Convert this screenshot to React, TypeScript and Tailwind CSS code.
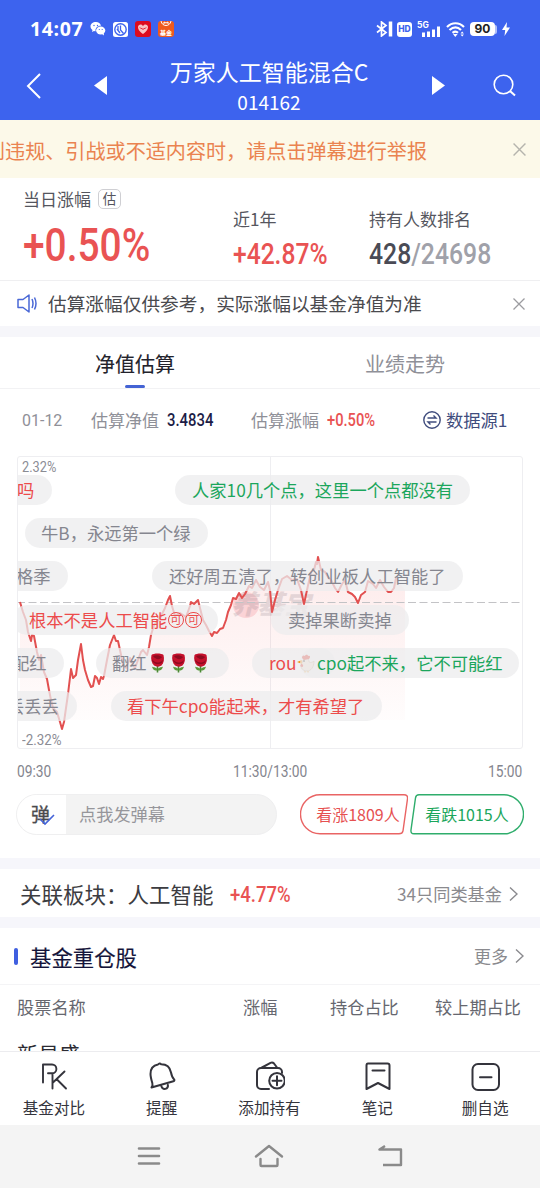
import type { ReactNode } from 'react';
import clsx from 'clsx';

type Tone = 'up' | 'down' | 'flat';

interface Danmu {
  content: ReactNode;
  tone: Tone;
  /** 位置与宽度 */
  box: string;
}

const TONE_CLASS: Record<Tone, string> = {
  up: 'text-[#ec4b4b]',
  down: 'text-[#1ba65c]',
  flat: 'text-[#85868f]',
};

const LINE =
  '20,602 23,612 26,620 28,632 31,641 32,635 34,636 37,652 39,660 41,655 44,672 47,679 49,690 51,700 53,708 57,712 60,722 62,729 64,722 66,708 68,694 71,669 73,678 76,675 78,660 81,644 83,660 85,670 88,680 91,687 93,686 95,676 97,678 99,684 101,677 103,679 104,676 107,660 110,645 114,635 116,641 118,641 120,650 123,664 126,668 130,658 135,668 138,660 141,652 143,650 147,655 149,647 151,635 154,625 160,618 165,608 168,600 170,596 172,606 175,616 180,613 186,617 190,606 191,602 194,604 198,600 200,608 203,620 206,625 209,631 212,636 214,632 217,633 220,629 223,628 226,620 228,612 231,605 233,598 236,599 239,593 242,598 245,594 249,586 252,588 256,580 260,587 264,590 268,582 270,590 272,612 275,600 278,590 282,579 287,576 292,580 297,579 301,590 304,604 307,590 311,572 314,570 316,562 317,564 318,557 321,570 325,572 328,577 331,580 335,588 338,592 342,584 345,580 348,592 352,594 355,597 358,603 361,595 365,592 368,581 373,584 376,588 380,580 384,587 388,592 391,592 394,588 396,578';

/** 窄体数字：外层占位，内层横向压缩 */
function Num({ w, className, children }: { w: string; className: string; children: ReactNode }) {
  return (
    <span className={clsx('block shrink-0', w)}>
      <span className={clsx("block origin-left whitespace-nowrap font-['Roboto',sans-serif]", className)}>
        {children}
      </span>
    </span>
  );
}

function Rose() {
  return (
    <svg className="h-[20px] w-[21.5px] shrink-0" viewBox="0 0 21.5 20">
      <path d="M10.5 11v8.5" stroke="#4b8a35" strokeWidth="1.6" />
      <path d="M10 15.500c-3-2-4-1-5-2 1 4 3 4 5 4zM11 15.500c3-2 4-1 5-2-1 4-3 4-5 4z" fill="#5a9a3c" />
      <path d="M4.500 2c2-2 10-2 12 0 1 4 .5 8-2 10.500-2 1.500-5 1.500-7.500 0C4.500 10 3.500 6 4.500 2z" fill="#c5112c" />
      <path d="M6 3c3-1.500 6-1 9 1-2 3-6 3-9-1zM5 6c2 4 7 5 11 1l-1 2.500c-3 2.500-7 2-9.500-1z" fill="#8e0b20" />
    </svg>
  );
}

function Chicken() {
  return (
    <svg className="mx-[1px] h-[19px] w-[18px] shrink-0" viewBox="0 0 18 19">
      <path d="M7 4c3-1 5 1 5 4 2 1 4 0 5-1 0 6-3 10-7 10-5 0-7-4-5-8z" fill="#efe0d0" stroke="#c9b199" strokeWidth=".9" />
      <path d="M5 4c0-3 2-3 3-2 1-2 3-1 3 0 2-1 3 1 1 3L7 6z" fill="#dd3227" />
      <path d="M5 6 0 8l5 2z" fill="#f0951d" />
      <path d="M4 10c-1 2 0 3 1 3s2-2 0-3z" fill="#dd3227" />
      <circle cx="7" cy="7" r=".9" fill="#333" />
      <path d="M8 17v1.500M11 17v1.500" stroke="#f0951d" />
    </svg>
  );
}

function Ke() {
  return (
    <span className="mx-[.5px] flex size-[16.500px] items-center justify-center rounded-full border border-[#ec4b4b] text-[11.500px] leading-none">
      可
    </span>
  );
}

const DANMU: Danmu[] = [
  { content: '吗', tone: 'up', box: 'left-[-40px] top-[18px] w-[74px] pl-[39px]' },
  { content: '人家10几个点，这里一个点都没有', tone: 'down', box: 'left-[157px] top-[18px] w-[295px] pl-[17px]' },
  { content: '牛B，永远第一个绿', tone: 'flat', box: 'left-[7px] top-[61px] w-[183px] pl-[16px]' },
  { content: '格季', tone: 'flat', box: 'left-[-40px] top-[104px] w-[90px] pl-[38px]' },
  { content: '还好周五清了，转创业板人工智能了', tone: 'flat', box: 'left-[134px] top-[104px] w-[311px] pl-[17px]' },
  { content: <>根本不是人工智能<Ke /><Ke /></>, tone: 'up', box: 'left-[-6px] top-[148px] w-[206px] pl-[17px]' },
  { content: '卖掉果断卖掉', tone: 'flat', box: 'left-[253px] top-[148px] w-[138px] pl-[17px]' },
  { content: '配红', tone: 'flat', box: 'left-[-40px] top-[191px] w-[86px] pl-[34px]' },
  { content: <>翻红<Rose /><Rose /><Rose /></>, tone: 'flat', box: 'left-[78px] top-[191px] w-[133px] pl-[16px]' },
  { content: <>rou<Chicken /></>, tone: 'up', box: 'left-[234px] top-[191px] w-[83px] pl-[17px]' },
  { content: 'cpo起不来，它不可能红', tone: 'down', box: 'left-[282px] top-[191px] w-[219px] pl-[17px]' },
  { content: '丢丢丢', tone: 'flat', box: 'left-[-40px] top-[234px] w-[99px] pl-[29px]' },
  { content: '看下午cpo能起来，才有希望了', tone: 'up', box: 'left-[93px] top-[234px] w-[271px] pl-[16px]' },
];

function StatusBar() {
  return (
    <div className="flex h-[58px] items-center pl-[30px] pr-[30px]">
      <span className="w-[60px] font-['Open_Sans',sans-serif] text-[19.500px] font-bold tracking-[0.6px]">14:07</span>
      <svg className="h-[14px] w-[16px]" viewBox="0 0 16 14" fill="#fff">
        <path d="M6 0C2.700 0 .5 2 .5 4.500c0 1.500.8 2.700 2 3.500L2 10l2-1c.6.1 1.100.2 1.600.2C5 6 7.500 3.600 11 3.700 10.500 1.500 8.500 0 6 0z" />
        <ellipse cx="10.700" cy="8.500" rx="4.600" ry="4" />
        <path d="m12 12 2 1.500-.3-2.500z" />
        <g fill="#3d63ee"><circle cx="4" cy="3.500" r=".7" /><circle cx="7.500" cy="3.500" r=".7" /><circle cx="9.300" cy="7.500" r=".6" /><circle cx="12.200" cy="7.500" r=".6" /></g>
      </svg>
      <svg className="ml-[7px] size-[15px]" viewBox="0 0 15 15" fill="none">
        <rect width="15" height="15" rx="2.500" fill="#fff" />
        <circle cx="7.500" cy="7.500" r="5.700" stroke="#3d63ee" strokeWidth="1.400" />
        <path d="M5 4v5M7.500 3.500V8l3 3.500M4 7l3 4" stroke="#3d63ee" strokeWidth="1.300" />
      </svg>
      <svg className="ml-[7px] size-[16px]" viewBox="0 0 16 16">
        <rect width="16" height="16" rx="3" fill="#dd0b1f" />
        <path d="M8 13C4 10 3 8 3 6c0-3 4-3.500 5-1 1-2.500 5-2 5 1 0 2-1 4-5 7z" fill="#f8c3c3" />
        <path d="M5 6.500c1 2 2 0 3 2 1-2 2 0 3-2" stroke="#dd0b1f" fill="none" />
      </svg>
      <div className="ml-[7px] flex size-[16px] flex-col items-center justify-between overflow-hidden rounded-[3px] bg-[#ef5a1e]">
        <svg className="h-[6px] w-[12px]" viewBox="0 0 12 6" fill="none" stroke="#fff">
          <path d="M1 0c1 6 9 6 10 0M4 3V1l2 1 2-1v2" />
        </svg>
        <span className="text-[6px] font-bold leading-[9px]">基金</span>
      </div>

      <svg className="ml-auto h-[16px] w-[17px]" viewBox="0 0 17 16" fill="none" stroke="#fff" strokeWidth="1.700">
        <path d="m1 4.500 9 7L5.500 15V1L10 4.500l-9 7" />
        <path d="M14.500.5v15" strokeWidth="3.500" />
      </svg>
      <span className="ml-[4px] flex h-[15px] w-[15px] items-center justify-center rounded-[3px] bg-white font-['Inter',sans-serif] text-[8.500px] font-extrabold leading-none text-[#3d63ee]">
        HD
      </span>
      <svg className="ml-[5px] h-[16px] w-[23px]" viewBox="0 0 23 16" fill="#fff">
        <text x="0" y="7" fontSize="8.500" fontWeight="700" fontFamily="Inter, sans-serif">5G</text>
        <path d="M5 11.500h3V16H5zM10 10.500h3V16h-3zM15 8.500h3V16h-3zM20 5.500h3V16h-3z" />
      </svg>
      <svg className="ml-[6px] h-[15px] w-[19px]" viewBox="0 0 19 15" fill="none" stroke="#fff" strokeWidth="2.200">
        <path d="M1 5c5-5 12-5 17 0M3.500 8c4-3.500 8-3.500 11.500 0M6.500 10.800c2-1.500 4-1.500 5.500 0" />
        <path d="m7 12 2.300 3 2.300-3z" fill="#fff" stroke="none" />
        <path d="m14.500 11.500 1.700-2 1.700 2zM14.500 12.500l1.700 2 1.700-2z" fill="#fff" stroke="none" />
      </svg>
      <span className="ml-[5px] flex h-[14px] w-[25px] items-center justify-center rounded-[4px] bg-white font-['Inter',sans-serif] text-[12px] font-bold leading-none text-[#222]">
        90
      </span>
      <span className="h-[9px] w-[2px] rounded-r bg-white/60" />
      <svg className="ml-[5px] h-[14px] w-[8px]" viewBox="0 0 8 14" fill="#fff"><path d="M5 0 0 8h3.200L2.500 14 8 5.500H4.500z" /></svg>
    </div>
  );
}

function Header() {
  return (
    <header className="h-[120px] shrink-0 bg-[#3d63ee] text-white">
      <StatusBar />
      <div className="flex h-[55px] items-center justify-between pl-[26px] pr-[24px]">
        <div className="flex w-[90px] items-center justify-between">
          <svg className="h-[26px] w-[15px]" viewBox="0 0 15 26" fill="none" stroke="#fff" strokeWidth="2"><path d="M14 1 2 13l12 12" /></svg>
          <svg className="mr-[9px] h-[19px] w-[13px]" viewBox="0 0 13 19"><path d="M13 0v19L0 9.500z" fill="#fff" /></svg>
        </div>
        <div className="mr-[2px] flex flex-col items-center">
          <h1 className="h-[30px] text-[23px] leading-[27px]">万家人工智能混合C</h1>
          <span className="h-[26px] text-[19px] leading-[27px]">014162</span>
        </div>
        <div className="flex w-[92px] items-center justify-between">
          <svg className="ml-[8px] h-[19px] w-[13px]" viewBox="0 0 13 19"><path d="M0 0v19l13-9.500z" fill="#fff" /></svg>
          <svg className="size-[23px]" viewBox="0 0 23 23" fill="none" stroke="#fff" strokeWidth="1.600"><circle cx="10.500" cy="10.500" r="9.300" /><path d="m17 17 5 4.500" strokeWidth="2" /></svg>
        </div>
      </div>
    </header>
  );
}

function Cross({ className }: { className: string }) {
  return (
    <svg className={clsx('shrink-0', className)} viewBox="0 0 12 12" fill="none" stroke="currentColor" strokeWidth="1.300">
      <path d="m.5.5 11 11M11.500.5l-11 11" />
    </svg>
  );
}

function Summary() {
  return (
    <section className="flex h-[103px] shrink-0 border-b border-[#efeff1]">
      <div className="w-[210px] pl-[23px] pt-[9px]">
        <div className="flex items-center text-[17px] leading-[24px] text-[#55565e]">
          当日涨幅
          <span className="ml-[7px] flex h-[20px] w-[23px] items-center justify-center rounded-[5px] border border-[#cfcfd3] text-[13.500px] leading-none">估</span>
        </div>
        <Num w="w-[128px]" className="scale-x-[0.845] text-[46px] font-medium leading-[68px] text-[#e95353]">+0.50%</Num>
      </div>
      <div className="w-[137px] pl-[23px] pt-[28px]">
        <div className="text-[17px] leading-[26px] text-[#55565e]">近1年</div>
        <Num w="w-[94px]" className="scale-x-[0.82] text-[30px] font-medium leading-[44px] text-[#e95353]">+42.87%</Num>
      </div>
      <div className="pl-[22px] pt-[28px]">
        <div className="text-[17px] leading-[26px] text-[#55565e]">持有人数排名</div>
        <Num w="w-[121px]" className="scale-x-[0.825] text-[30px] font-medium leading-[44px] text-[#4a4b55]">
          428<span className="text-[#a0a1a9]">/24698</span>
        </Num>
      </div>
    </section>
  );
}

function Chart() {
  return (
    <div className="relative ml-[17px] mt-[18px] h-[293px] w-[506px] shrink-0 overflow-hidden rounded-[3px] border border-[#eeeef1]">
      <svg className="absolute -left-px -top-px h-[293px] w-[506px]" viewBox="17 456 506 293" fill="none">
        <defs>
          <linearGradient id="area" x1="0" y1="556" x2="0" y2="740" gradientUnits="userSpaceOnUse">
            <stop offset="0" stopColor="#f35a5a" stopOpacity=".13" />
            <stop offset="1" stopColor="#f35a5a" stopOpacity="0" />
          </linearGradient>
        </defs>
        <path d="M270.500 456v293" stroke="#eeeef1" />
        <polygon points={`20,720 ${LINE} 405,590 405,720`} fill="url(#area)" />
        <circle cx="246" cy="605" r="13" fill="#f9c6ca" opacity=".7" />
        <text x="231" y="614" fontSize="26.500" fontWeight="900" fontStyle="italic" fontFamily="'Noto Sans CJK SC', sans-serif" fill="#9b8b93" opacity=".25">养基宝</text>
        <path d="M17 602.500h506" stroke="#c3c3c6" strokeDasharray="8 3.500" />
        <polyline points={LINE} stroke="#e25050" strokeWidth="2" strokeLinejoin="round" />
      </svg>
      <Num w="w-[40px]" className="ml-[4px] scale-x-[0.88] text-[14.500px] leading-[21px] text-[#8b8c94]">2.32%</Num>
      <Num w="w-[40px]" className="ml-[4px] mt-[252px] scale-x-[0.92] text-[14.500px] leading-[21px] text-[#8b8c94]">-2.32%</Num>
      {DANMU.map((d, i) => (
        <div
          key={i}
          className={clsx(
            'absolute flex h-[30px] items-center whitespace-nowrap rounded-full bg-[#ececed]/75 text-[17.300px] leading-[30px]',
            d.box,
            TONE_CLASS[d.tone],
          )}
        >
          {d.content}
        </div>
      ))}
    </div>
  );
}

function Chevron({ className }: { className: string }) {
  return (
    <svg className={clsx('h-[14px] w-[9px]', className)} viewBox="0 0 9 14" fill="none" stroke="#8a8a8e" strokeWidth="1.400">
      <path d="m1 .5 7 6.500-7 6.500" />
    </svg>
  );
}

function VoteBar() {
  return (
    <div className="mt-[11px] flex h-[41px] shrink-0 px-[16px]">
      <div className="flex h-[41px] w-[261px] overflow-hidden rounded-full border border-[#efeff0] bg-[#f3f3f3]">
        <div className="relative w-[49px] bg-white">
          <span className="absolute left-[14px] top-[6px] text-[19px] leading-[26px] text-[#4a4a4e] [-webkit-text-stroke:0.3px]">弹</span>
          <svg className="absolute left-[22px] top-[19px] h-[12px] w-[16px]" viewBox="0 0 16 12" fill="none" stroke="#4463d8" strokeWidth="1.600"><path d="m1 5 5 5 9-9" /></svg>
        </div>
        <span className="pl-[13px] text-[17.200px] leading-[38px] text-[#96969b]">点我发弹幕</span>
      </div>
      <div className="relative ml-[23px] w-[108px] text-center text-[16px] leading-[40px] text-[#e65050]">
        <svg className="absolute left-0 top-0 h-[41px] w-[108px]" viewBox="0 0 108 41" fill="none" stroke="#e96464" strokeWidth="1.400">
          <path d="M20 .8h84q4 0 3.500 4l-4.500 32q-.5 3-4 3H20a19.500 19.500 0 0 1 0-39z" />
        </svg>
        <span className="whitespace-nowrap pl-[8px]">看涨1809人</span>
      </div>
      <div className="relative ml-[2px] w-[114px] text-center text-[16px] leading-[40px] text-[#1ba65c]">
        <svg className="absolute left-0 top-0 h-[41px] w-[114px]" viewBox="0 0 114 41" fill="none" stroke="#2fad6c" strokeWidth="1.400">
          <path d="M94 .8H9q-3 0-3.500 3l-4.500 32q-.5 4 3 4h90a19.500 19.500 0 0 0 0-39z" />
        </svg>
        <span className="whitespace-nowrap">看跌1015人</span>
      </div>
    </div>
  );
}

const TABBAR = [
  {
    label: '基金对比',
    icon: <path d="M5 21.500V3.500h9a4.400 4.400 0 0 1 0 8.800H10M14.500 13v14.500M26.500 10.500 15 21.500M18.500 18l9.500 9.500" strokeWidth="1.900" />,
  },
  {
    label: '提醒',
    icon: (
      <path d="M5.500 26.500c1.200-1.400 1.400-2.500.8-4.500-1.200-4-1.800-6.500-1.800-9C4.500 7.500 7.500 4.300 12 3.500c1-1.300 2.300-1.300 3.200-.2 5.300 0 8.800 3 9.800 8.200.7 3.500 1 5 3 6.700.8.700.4 1.800-.6 2zM15.500 25.500c1.400 4 7 2.800 6.400-1.600" />
    ),
  },
  {
    label: '添加持有',
    icon: (
      <>
        <path d="M16 28H8a4 4 0 0 1-4-4V11a4 4 0 0 1 4-4h17a4 4 0 0 1 4 4v1" />
        <path d="M9 6.500 17.500 1.800q2-1 3.500.7l3 4" />
        <circle cx="24" cy="19.800" r="7.800" />
        <path d="M24 15.300v9M19.500 19.800h9" />
      </>
    ),
  },
  {
    label: '笔记',
    icon: <path d="M7 2.500h19.500q2 0 2 2v23.500L17 22 5.500 28V4.500q0-2 1.500-2zM11.500 9.500h12" />,
  },
  {
    label: '删自选',
    icon: (
      <>
        <rect x="3.500" y="3" width="26.500" height="26" rx="5.500" />
        <path d="M11 16.300h11.500" />
      </>
    ),
  },
];

export default function App() {
  return (
    <div className="flex h-[1188px] w-[540px] flex-col overflow-hidden bg-white font-['Noto_Sans_CJK_SC',sans-serif]">
      <Header />

      <div className="flex h-[58px] shrink-0 items-center justify-between overflow-hidden bg-[#fcf9e9] pr-[14px]">
        <span className="ml-[-15px] whitespace-nowrap pt-[3px] text-[20.100px] leading-[56px] text-[#ea8350]">
          到违规、引战或不适内容时，请点击弹幕进行举报
        </span>
        <Cross className="size-[13px] text-[#b5b4ad]" />
      </div>

      <Summary />

      <div className="flex h-[45px] shrink-0 items-center pl-[17px] pr-[15px]">
        <svg className="h-[19px] w-[20px]" viewBox="0 0 20 19" fill="none" stroke="#4a68d6" strokeWidth="1.500" strokeLinejoin="round">
          <path d="M1 5.500h5l6-4.500v17l-6-4.500H1zM15 5q2 4.500 0 9M17.500 3.500q3 6 0 12" />
        </svg>
        <span className="ml-[11px] pb-[2px] text-[18.700px] leading-[43px] text-[#4a4a4e]">估算涨幅仅供参考，实际涨幅以基金净值为准</span>
        <Cross className="ml-auto size-[12px] text-[#9c9ca0]" />
      </div>
      <div className="h-[11px] shrink-0 bg-[#f6f6fa]" />

      <nav className="grid h-[52px] shrink-0 grid-cols-2 border-b border-[#f2f2f4] text-center text-[20px] leading-[53px]">
        <div className="flex flex-col items-center">
          <span className="h-[48px] text-[#22222b] [-webkit-text-stroke:0.12px]">净值估算</span>
          <span className="h-[3px] w-[20px] shrink-0 rounded-full bg-[#4463d4]" />
        </div>
        <span className="text-[#8f9098]">业绩走势</span>
      </nav>

      <div className="mt-[13px] flex h-[36px] shrink-0 items-center pl-[22px] text-[17px] text-[#8f9098]">
        <Num w="w-[69px]" className="scale-x-[0.94] pt-[1px] text-[17px]">01-12</Num>
        <span className="w-[76px]">估算净值</span>
        <Num w="w-[84px]" className="scale-x-[0.85] pt-[1px] text-[17.500px] font-medium text-[#1c1c46]">3.4834</Num>
        <span className="w-[76px]">估算涨幅</span>
        <Num w="w-[96px]" className="scale-x-[0.84] pt-[1px] text-[17.500px] font-medium text-[#e95353]">+0.50%</Num>
        <svg className="size-[18px]" viewBox="0 0 18 18" fill="none" stroke="#3f4c7d" strokeWidth="1.400">
          <circle cx="9" cy="9" r="8.200" />
          <path d="M4.500 7h8.500L10.500 4.500M13.500 11H5l2.500 2.500" />
        </svg>
        <span className="ml-[5px] text-[17.300px] text-[#3f4c7d]">数据源1</span>
      </div>

      <Chart />

      <div className="mt-[12px] flex h-[22px] shrink-0 items-center justify-between pl-[17px] pr-[18px] text-[#84858e]">
        <Num w="w-[34px]" className="scale-x-[0.86] text-[16px]">09:30</Num>
        <Num w="w-[73px]" className="scale-x-[0.86] text-[16px]">11:30/13:00</Num>
        <Num w="w-[34px]" className="scale-x-[0.86] text-[16px]">15:00</Num>
      </div>

      <VoteBar />

      <div className="mt-[23px] h-[11px] shrink-0 bg-[#f6f6fb]" />
      <div className="flex h-[48px] shrink-0 items-center pl-[20px] pr-[22px] pt-[1px]">
        <span className="w-[210px] whitespace-nowrap pt-[1px] text-[21.500px] text-[#3c3c41]">关联板块：人工智能</span>
        <Num w="w-[61px]" className="scale-x-[0.84] pt-[1px] text-[22px] font-medium text-[#e95353]">+4.77%</Num>
        <span className="ml-auto text-[17.200px] text-[#8a8a8e]">34只同类基金</span>
        <Chevron className="ml-[7px]" />
      </div>
      <div className="h-[11px] shrink-0 bg-[#f6f6fb]" />

      <div className="flex h-[57px] shrink-0 items-center border-b border-[#f4f4f6] pl-[14px] pr-[16px]">
        <span className="h-[17px] w-[4px] rounded-[2px] bg-[#3f5fe0]" />
        <h2 className="ml-[12px] pt-[2px] text-[21.400px] text-[#14143a] [-webkit-text-stroke:0.15px]">基金重仓股</h2>
        <span className="ml-auto text-[17px] text-[#8a8a8e]">更多</span>
        <Chevron className="ml-[7px]" />
      </div>

      <div className="min-h-0 flex-1 overflow-hidden pl-[17px] pr-[19px]">
        <div className="flex h-[44px] items-center text-[17.200px] text-[#66676f]">
          <span className="w-[226px]">股票名称</span>
          <span className="w-[87px]">涨幅</span>
          <span>持仓占比</span>
          <span className="ml-auto">较上期占比</span>
        </div>
        <div className="mt-[7px] text-[21px] leading-[34px] text-[#2b2b33]">新易盛</div>
      </div>

      <footer className="grid h-[74px] shrink-0 grid-cols-5 border-t border-[#ececef] bg-white pr-px">
        {TABBAR.map((t) => (
          <div key={t.label} className="flex flex-col items-center pt-[9px]">
            <svg className="size-[32px] shrink-0" viewBox="0 0 32 32" fill="none" stroke="#34343c" strokeWidth="2" strokeLinejoin="round" strokeLinecap="round">
              {t.icon}
            </svg>
            <span className="mt-[2px] whitespace-nowrap text-[15.600px] leading-[24px] text-[#34343c]">{t.label}</span>
          </div>
        ))}
      </footer>

      <div className="flex h-[63px] shrink-0 items-center justify-center gap-[93px] bg-[#f4f4f4] pb-[1px]">
        <svg className="h-[20px] w-[24px]" viewBox="0 0 24 20" stroke="#8a8a8a" strokeWidth="2.600" strokeLinecap="round">
          <path d="M2 2.500h20M2 10h20M2 17.500h20" />
        </svg>
        <svg className="h-[24px] w-[30px]" viewBox="0 0 30 24" fill="none" stroke="#8a8a8a" strokeWidth="2.400" strokeLinecap="round" strokeLinejoin="round">
          <path d="M2 12.500 15 2l13 10.500M6.500 15v6q0 1 1 1h15q1 0 1-1v-6" />
        </svg>
        <svg className="h-[22px] w-[26px]" viewBox="0 0 26 22" fill="none" stroke="#8a8a8a" strokeWidth="2.400" strokeLinejoin="round">
          <path d="M8 1 2.500 4.500h21.500v15.500H6" />
        </svg>
      </div>
    </div>
  );
}
